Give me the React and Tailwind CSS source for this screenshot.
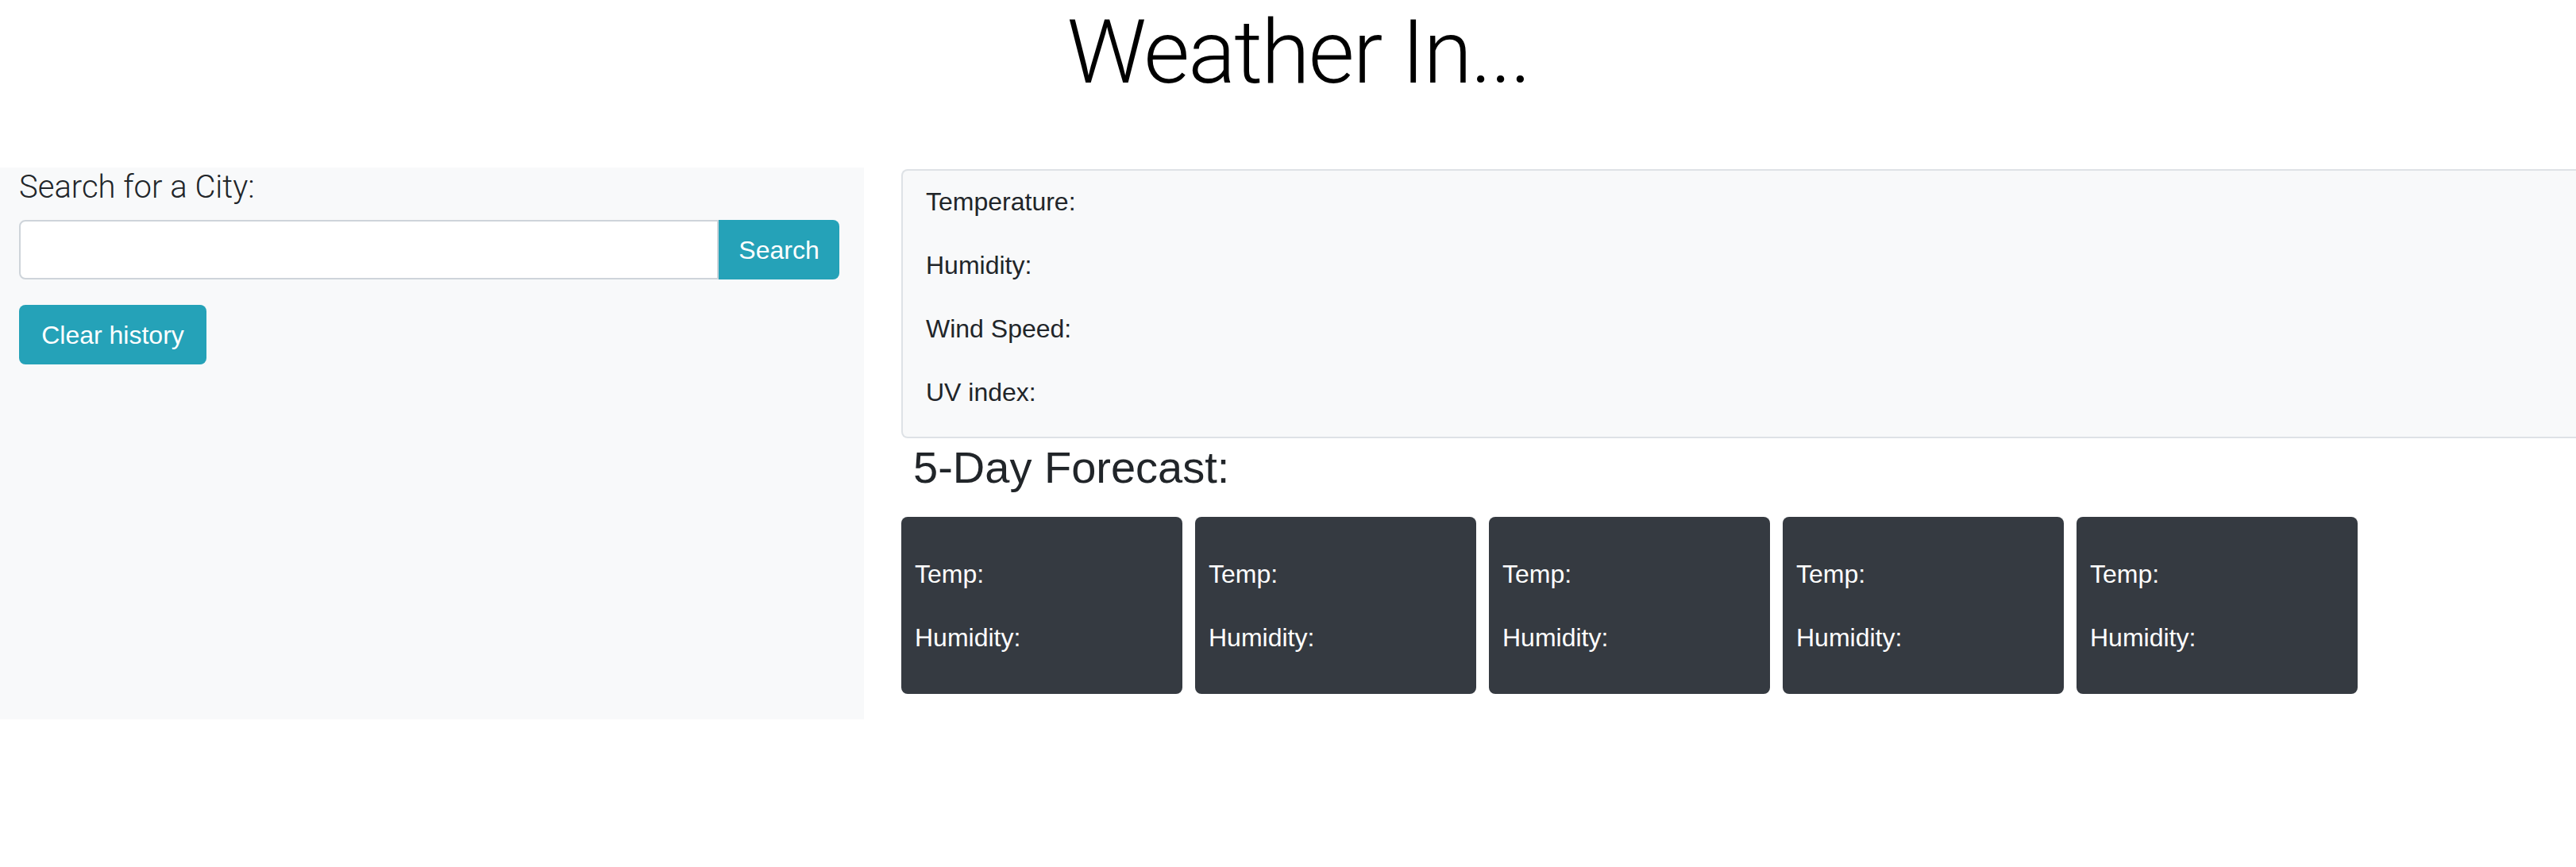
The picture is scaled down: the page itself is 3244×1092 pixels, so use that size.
// App.jsx — weather dashboard

const days = [1, 2, 3, 4, 5];

const ForecastCard = () => (
  <div className="w-[354px] h-[223px] shrink-0 rounded-[8px] bg-[#353a41] pl-[17px] pt-[48px] text-white">
    <p className="text-[32px] leading-[48px] mb-[32px]">Temp:</p>
    <p className="text-[32px] leading-[48px] mb-[32px]">Humidity:</p>
  </div>
);

const App = () => (
  <div className="min-h-screen w-full overflow-hidden bg-white text-[#212529] font-['Liberation_Sans',Arial,sans-serif]">
    <h1 className="pl-[26px] text-center text-[112px] leading-[132px] font-light tracking-[-2px] text-black mb-[79px] font-['Roboto','Liberation_Sans',sans-serif]">
      Weather In...
    </h1>

    <div className="flex items-start">
      <aside className="w-[1088px] h-[695px] shrink-0 bg-[#f8f9fa] pl-[24px] pr-[31px] pt-px">
        <label className="block text-[40px] leading-[48px] font-light font-['Roboto','Liberation_Sans',sans-serif]">
          Search for a City:
        </label>
        <div className="flex mt-[17px] h-[75px]">
          <input
            type="text"
            className="flex-1 min-w-0 bg-white border-2 border-[#ced4da] rounded-l-[8px] px-4 text-[32px] outline-none"
          />
          <button className="w-[152px] bg-[#25a2b8] text-white text-[32px] rounded-r-[8px]">Search</button>
        </div>
        <button className="mt-[32px] h-[75px] w-[236px] rounded-[8px] bg-[#25a2b8] text-white text-[32px]">
          Clear history
        </button>
      </aside>

      <main className="flex-1 min-w-0 ml-[47px]">
        <section className="mt-[2px] border-2 border-r-0 border-[#dee2e6] rounded-l-[8px] bg-[#f8f9fa] pl-[29px] pt-[15px]">
          <p className="text-[32px] leading-[48px] mb-[32px]">Temperature:</p>
          <p className="text-[32px] leading-[48px] mb-[32px]">Humidity:</p>
          <p className="text-[32px] leading-[48px] mb-[32px]">Wind Speed:</p>
          <p className="text-[32px] leading-[48px] mb-[32px]">UV index:</p>
        </section>

        <h3 className="mt-[3px] ml-[15px] text-[56px] leading-[67px] font-medium">5-Day Forecast:</h3>

        <div className="flex gap-[16px] mt-[29px]">
          {days.map(d => <ForecastCard key={d} />)}
        </div>
      </main>
    </div>
  </div>
);

export default App;
